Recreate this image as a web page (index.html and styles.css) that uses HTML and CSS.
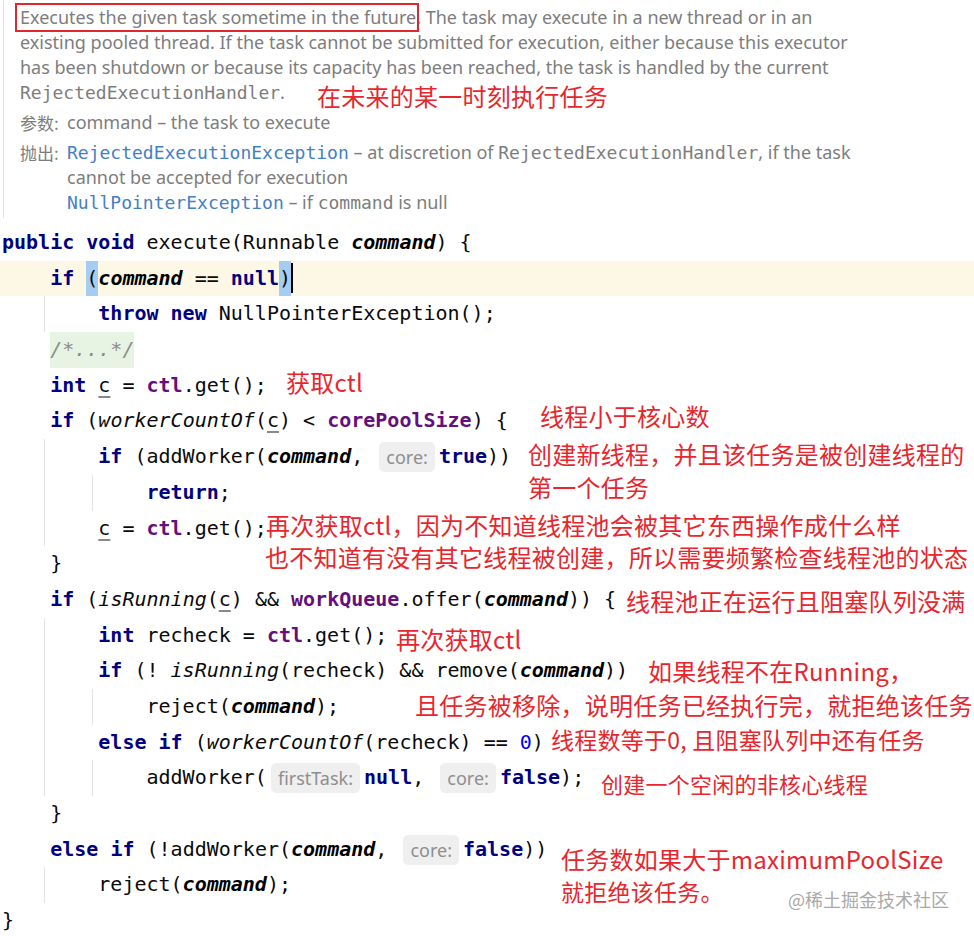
FILE: index.html
```html
<!DOCTYPE html>
<html lang="zh">
<head>
<meta charset="utf-8">
<title>execute</title>
<link rel="stylesheet" href="styles.css">
</head>
<body>
<div class="doc">
  <p class="desc"><span class="boxed">Executes the given task sometime in the future</span>. The task may execute in a new thread or in an<br>existing pooled thread. If the task cannot be submitted for execution, either because this executor<br>has been shutdown or because its capacity has been reached, the task is handled by the current<br><code class="m">RejectedExecutionHandler</code>.</p>
  <div class="row"><span class="lbl">参数:</span><div class="val">command – the task to execute</div></div>
  <div class="row"><span class="lbl">抛出:</span><div class="val"><code class="lnk">RejectedExecutionException</code> – at discretion of <code class="m">RejectedExecutionHandler</code>, if the task<br>cannot be accepted for execution<br><code class="lnk">NullPointerException</code> – if <code class="m">command</code> is null</div></div>
  <div class="note a1">在未来的某一时刻执行任务</div>
</div>
<div class="code">
  <div class="ln"><span class="t"><span class="k">public</span> <span class="k">void</span> execute(Runnable <span class="p">command</span>) {</span></div>
  <div class="ln hl"><span class="ind"></span><span class="t"><span class="k">if</span> <span class="bm">(</span><span class="p">command</span> == <span class="k">null</span><span class="bm">)</span><span class="caret"></span></span></div>
  <div class="ln"><span class="ind g"></span><span class="ind"></span><span class="t"><span class="k">throw</span> <span class="k">new</span> NullPointerException();</span></div>
  <div class="ln"><span class="ind"></span><span class="t"><span class="cm">/*...*/</span></span></div>
  <div class="ln"><span class="ind"></span><span class="t"><span class="k">int</span> <span class="u">c</span> = <span class="f">ctl</span>.get();</span></div>
  <div class="ln"><span class="ind"></span><span class="t"><span class="k">if</span> (<span class="s">workerCountOf</span>(<span class="u">c</span>) &lt; <span class="f">corePoolSize</span>) {</span></div>
  <div class="ln"><span class="ind g"></span><span class="ind"></span><span class="t"><span class="k">if</span> (addWorker(<span class="p">command</span>, <span class="h">core:</span><span class="k">true</span>))</span></div>
  <div class="ln"><span class="ind g"></span><span class="ind g"></span><span class="ind"></span><span class="t"><span class="k">return</span>;</span></div>
  <div class="ln"><span class="ind g"></span><span class="ind"></span><span class="t"><span class="u">c</span> = <span class="f">ctl</span>.get();</span></div>
  <div class="ln"><span class="ind"></span><span class="t">}</span></div>
  <div class="ln"><span class="ind"></span><span class="t"><span class="k">if</span> (<span class="s">isRunning</span>(<span class="u">c</span>) &amp;&amp; <span class="f">workQueue</span>.offer(<span class="p">command</span>)) {</span></div>
  <div class="ln"><span class="ind g"></span><span class="ind"></span><span class="t"><span class="k">int</span> recheck = <span class="f">ctl</span>.get();</span></div>
  <div class="ln"><span class="ind g"></span><span class="ind"></span><span class="t"><span class="k">if</span> (! <span class="s">isRunning</span>(recheck) &amp;&amp; remove(<span class="p">command</span>))</span></div>
  <div class="ln"><span class="ind g"></span><span class="ind g"></span><span class="ind"></span><span class="t">reject(<span class="p">command</span>);</span></div>
  <div class="ln"><span class="ind g"></span><span class="ind"></span><span class="t"><span class="k">else</span> <span class="k">if</span> (<span class="s">workerCountOf</span>(recheck) == <span class="n">0</span>)</span></div>
  <div class="ln"><span class="ind g"></span><span class="ind g"></span><span class="ind"></span><span class="t">addWorker(<span class="h">firstTask:</span><span class="k">null</span>, <span class="h">core:</span><span class="k">false</span>);</span></div>
  <div class="ln"><span class="ind"></span><span class="t">}</span></div>
  <div class="ln"><span class="ind"></span><span class="t"><span class="k">else</span> <span class="k">if</span> (!addWorker(<span class="p">command</span>, <span class="h">core:</span><span class="k">false</span>))</span></div>
  <div class="ln"><span class="ind g"></span><span class="ind"></span><span class="t">reject(<span class="p">command</span>);</span></div>
  <div class="ln"><span class="t">}</span></div>

  <div class="note a2">获取ctl</div>
  <div class="note a3">线程小于核心数</div>
  <div class="note a4">创建新线程，并且该任务是被创建线程的</div>
  <div class="note a5">第一个任务</div>
  <div class="note a6">再次获取ctl，因为不知道线程池会被其它东西操作成什么样</div>
  <div class="note a7">也不知道有没有其它线程被创建，所以需要频繁检查线程池的状态</div>
  <div class="note a8">线程池正在运行且阻塞队列没满</div>
  <div class="note a9">再次获取ctl</div>
  <div class="note a10">如果线程不在Running，</div>
  <div class="note a11">且任务被移除，说明任务已经执行完，就拒绝该任务</div>
  <div class="note a12">线程数等于0, 且阻塞队列中还有任务</div>
  <div class="note a13">创建一个空闲的非核心线程</div>
  <div class="note a14">任务数如果大于maximumPoolSize</div>
  <div class="note a15">就拒绝该任务。</div>
  <div class="wm">@稀土掘金技术社区</div>
</div>
</body>
</html>
```
FILE: styles.css
```css
* { box-sizing: border-box; }
html, body { margin: 0; padding: 0; background: #fff; }
body { width: 974px; height: 936px; overflow: hidden; font-family: "Noto Sans", "Noto Sans CJK SC", sans-serif; }

/* ---- documentation popup ---- */
.doc {
  position: relative;
  margin-left: 3px;
  height: 218px;
  border-left: 1px solid #e2e2e2;
  padding: 5px 0 0 16px;
  color: #7d7d7d;
  font-size: 18px;
  line-height: 25px;
}
.desc { margin: 0; }
.boxed { position: relative; }
.boxed::after {
  content: "";
  position: absolute;
  left: -5px; right: -3px; top: -2px; bottom: -3px;
  border: 2px solid #e0262e;
}
.m, .lnk { font-family: "DejaVu Sans Mono", monospace; font-size: 18px; }
.m { color: #7d7d7d; }
.lnk { color: #4480c4; }
.row { display: grid; grid-template-columns: 47px 1fr; margin-top: 5px; }
.lbl { font-family: "Noto Sans CJK SC", sans-serif; font-size: 17px; }

/* ---- code editor ---- */
.code {
  position: relative;
  margin-top: 7px;
  font-family: "DejaVu Sans Mono", monospace;
  font-size: 20px;
  color: #0a0a0a;
}
.ln { display: flex; height: 35.7px; line-height: 35.7px; padding-left: 2px; white-space: pre; }
.hl { background: #fdf8e5; }
.ind { flex: none; width: 4ch; }
.g { background: linear-gradient(#e4e4e4, #e4e4e4) no-repeat calc(100% - 5px) 0 / 1px 100%; }
.t { white-space: pre; }
.k { color: #000080; font-weight: bold; }
.f { color: #660e7a; font-weight: bold; }
.p { font-style: italic; font-weight: bold; color: #000; }
.s { font-style: italic; }
.n { color: #0000ff; }
.u { text-decoration: underline; text-decoration-color: #8a8a8a; text-underline-offset: 4px; }
.bm { display: inline-block; vertical-align: top; line-height: 35.7px; background: #a4cdf1; }
.cm { display: inline-block; vertical-align: top; line-height: 35.7px; background: #e7f3e3; color: #8c8c8c; font-style: italic; }
.caret { display: inline-block; vertical-align: top; width: 2px; height: 30px; margin-top: 2px; background: #000; }
.h {
  display: inline-block;
  vertical-align: top;
  height: 30px;
  margin: 3px 4px 0 4px;
  padding: 0 7px;
  border-radius: 5px;
  background: #efefef;
  color: #8e8e8e;
  font-family: "Noto Sans", sans-serif;
  font-size: 18px;
  line-height: 30px;
  font-weight: normal;
  font-style: normal;
}

/* ---- red annotations ---- */
.note {
  position: absolute;
  white-space: nowrap;
  color: #e8262d;
  font-family: "Noto Sans CJK SC", sans-serif;
  font-size: 24px;
  line-height: 1;
  letter-spacing: 0.25px;
}
.a1 { left: 313px; top: 84px; }
.a2 { left: 286px; top: 145px; }
.a3 { left: 540px; top: 179px; }
.a4 { left: 528px; top: 217px; }
.a5 { left: 528px; top: 250px; }
.a6 { left: 266px; top: 288px; }
.a7 { left: 265px; top: 320px; }
.a8 { left: 626px; top: 364px; }
.a9 { left: 396px; top: 402px; }
.a10 { left: 648px; top: 434px; }
.a11 { left: 415px; top: 468px; }
.a12 { left: 551px; top: 503px; font-size: 23px; }
.a13 { left: 601px; top: 547px; font-size: 22px; }
.a14 { left: 561px; top: 622px; }
.a15 { left: 561px; top: 655px; font-size: 23px; }
.wm {
  position: absolute;
  left: 788px;
  top: 665px;
  color: #a9a9a9;
  font-family: "Noto Sans CJK SC", sans-serif;
  font-size: 18px;
  line-height: 1;
  white-space: nowrap;
}
```
